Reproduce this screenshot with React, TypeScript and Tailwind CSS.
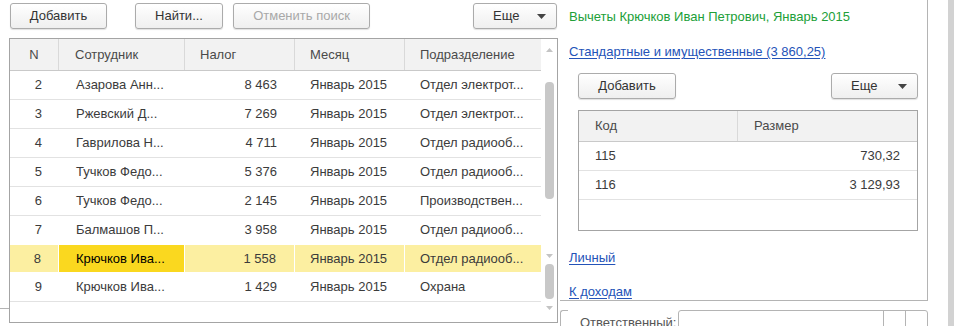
import React from "react"

const rows = [
  { n: "2", name: "Азарова Анн...", tax: "8 463", month: "Январь 2015", dep: "Отдел электрот..." },
  { n: "3", name: "Ржевский Д...", tax: "7 269", month: "Январь 2015", dep: "Отдел электрот..." },
  { n: "4", name: "Гаврилова Н...", tax: "4 711", month: "Январь 2015", dep: "Отдел радиооб..." },
  { n: "5", name: "Тучков Федо...", tax: "5 376", month: "Январь 2015", dep: "Отдел радиооб..." },
  { n: "6", name: "Тучков Федо...", tax: "2 145", month: "Январь 2015", dep: "Производствен..." },
  { n: "7", name: "Балмашов П...", tax: "3 958", month: "Январь 2015", dep: "Отдел радиооб..." },
  { n: "8", name: "Крючков Ива...", tax: "1 558", month: "Январь 2015", dep: "Отдел радиооб...", sel: true },
  { n: "9", name: "Крючков Ива...", tax: "1 429", month: "Январь 2015", dep: "Охрана" },
]

function Btn({
  children,
  className = "",
  disabled = false,
  between = false,
}: {
  children: React.ReactNode
  className?: string
  disabled?: boolean
  between?: boolean
}) {
  return (
    <div
      className={
        "h-[26px] flex items-center rounded-[3px] border border-[#ababab] bg-gradient-to-b from-white to-[#efefef] shadow-[0_1px_1px_rgba(0,0,0,0.12)] " +
        (between ? "justify-between " : "justify-center ") +
        (disabled ? "text-[#a8a8a8] " : "text-[#333] ") +
        className
      }
    >
      {children}
    </div>
  )
}

function Arrow() {
  return (
    <svg width="9" height="5" viewBox="0 0 9 5">
      <path d="M0 0h9L4.5 5z" fill="#444" />
    </svg>
  )
}

function MoreBtn({ className = "" }: { className?: string }) {
  return (
    <Btn between className={"pl-[19px] pr-[10px] " + className}>
      <span>Еще</span>
      <Arrow />
    </Btn>
  )
}

function ScrollArrow({ down = false, className = "" }: { down?: boolean; className?: string }) {
  return (
    <svg width="7" height="4" viewBox="0 0 7 4" className={className}>
      <path d={down ? "M0 0h7L3.5 4z" : "M0 4h7L3.5 0z"} fill="#c4c4c4" />
    </svg>
  )
}

export default function App() {
  return (
    <div className="h-[326px] w-[954px] overflow-hidden bg-white flex text-[13px] text-[#3b3b3b] font-['Liberation_Sans',Arial,sans-serif]">
      {/* left part */}
      <div className="flex w-[558px] shrink-0">
        <div className="w-[9px] h-[309px] border-b border-[#b4b4b4] shrink-0"></div>
        <div className="flex flex-col w-[549px]">
          <div className="flex pt-[3px] pl-px pr-[1px]">
            <Btn className="w-[97px]">Добавить</Btn>
            <Btn className="w-[88px] ml-[28px]">Найти...</Btn>
            <Btn className="w-[137px] ml-[10px]" disabled>Отменить поиск</Btn>
            <MoreBtn className="w-[84px] ml-auto" />
          </div>

          <div className="mt-[9px] h-[285px] border border-[#a4a4a4] flex">
            <div className="w-[531px] flex flex-col">
              <div className="h-[32px] bg-[#f2f2f2] border-b border-[#c9c9c9] grid grid-cols-[49px_126px_110px_110px_136px] items-center text-[#4a4a4a]">
                <div className="text-center h-full flex items-center justify-center border-r border-[#d9d9d9]">N</div>
                <div className="pl-[16px] h-full flex items-center border-r border-[#d9d9d9]">Сотрудник</div>
                <div className="pl-[15px] h-full flex items-center border-r border-[#d9d9d9]">Налог</div>
                <div className="pl-[15px] h-full flex items-center border-r border-[#d9d9d9]">Месяц</div>
                <div className="pl-[15px] h-full flex items-center">Подразделение</div>
              </div>
              {rows.map((r) => (
                <div
                  key={r.n}
                  className={
                    "h-[29px] border-b grid grid-cols-[49px_126px_110px_110px_136px] items-stretch " +
                    (r.sel ? "border-white bg-[#fcefa1] border-t border-t-white -mt-px" : "border-[#e2e2e2]")
                  }
                >
                  <div className={"flex items-center justify-end pr-[17px] " + (r.sel ? "border-r border-white" : "")}>{r.n}</div>
                  <div className={"flex items-center pl-[17px] " + (r.sel ? "bg-[#fad81f] text-black border-r border-white" : "")}>{r.name}</div>
                  <div className={"flex items-center justify-end pr-[18px] " + (r.sel ? "border-r border-white" : "")}>{r.tax}</div>
                  <div className={"flex items-center pl-[15px] " + (r.sel ? "border-r border-white" : "")}>{r.month}</div>
                  <div className="flex items-center pl-[15px]">{r.dep}</div>
                </div>
              ))}
            </div>
            <div className="w-[16px] flex flex-col items-center">
              <ScrollArrow className="mt-[9px]" />
              <div className="mt-[30px] w-[9px] h-[117px] rounded-[4px] bg-[#c8c8c8]"></div>
              <ScrollArrow down className="mt-[55px]" />
              <div className="mt-[6px] w-[9px] h-[35px] rounded-[4px] bg-[#c8c8c8]"></div>
              <ScrollArrow down className="mt-[7px]" />
            </div>
          </div>
        </div>
      </div>

      {/* right panel */}
      <div className="flex flex-col w-[370px] shrink-0">
        <div className="h-[309px] border-r border-b border-[#b4b4b4] ml-[2px] flex flex-col pl-[9px] pr-[9px]">
          <div className="pt-[9px] leading-[16px] text-[#21a038]">Вычеты Крючков Иван Петрович, Январь 2015</div>
          <div className="mt-[19px] leading-[16px]">
            <span className="text-[#2453b8] underline underline-offset-2">Стандартные и имущественные (3 860,25)</span>
          </div>
          <div className="mt-[13px] flex pl-[9px]">
            <Btn className="w-[98px]">Добавить</Btn>
            <MoreBtn className="w-[87px] ml-auto" />
          </div>
          <div className="mt-[11px] ml-[9px] h-[121px] border border-[#a4a4a4] flex flex-col">
            <div className="h-[31px] bg-[#f2f2f2] border-b border-[#c9c9c9] grid grid-cols-[159px_1fr] text-[#4a4a4a]">
              <div className="pl-[16px] flex items-center border-r border-[#d9d9d9]">Код</div>
              <div className="pl-[16px] flex items-center">Размер</div>
            </div>
            <div className="h-[29px] border-b border-[#e2e2e2] flex items-center justify-between pl-[16px] pr-[17px]">
              <span>115</span>
              <span>730,32</span>
            </div>
            <div className="h-[29px] border-b border-[#e2e2e2] flex items-center justify-between pl-[16px] pr-[17px]">
              <span>116</span>
              <span>3 129,93</span>
            </div>
          </div>
          <div className="mt-[19px] leading-[16px]">
            <span className="text-[#2453b8] underline underline-offset-2">Личный</span>
          </div>
          <div className="mt-[18px] leading-[16px]">
            <span className="text-[#2453b8] underline underline-offset-2">К доходам</span>
          </div>
        </div>
        <div className="mt-[9px] flex ml-[2px]">
          <div className="w-[8px] h-[20px] border-l border-t border-[#b4b4b4] rounded-tl-[3px]"></div>
          <div className="ml-[12px] w-[98px] text-[#555] leading-[16px] pt-[5px]">Ответственный:</div>
          <div className="w-[250px] h-[20px] border border-[#b4b4b4] rounded-t-[3px] flex">
            <div className="w-[205px] border-r border-[#b4b4b4]"></div>
            <div className="w-[22px] border-r border-[#b4b4b4]"></div>
          </div>
        </div>
      </div>

      <div className="ml-auto w-[6px] h-full bg-[#d2d2d2]"></div>
    </div>
  )
}
